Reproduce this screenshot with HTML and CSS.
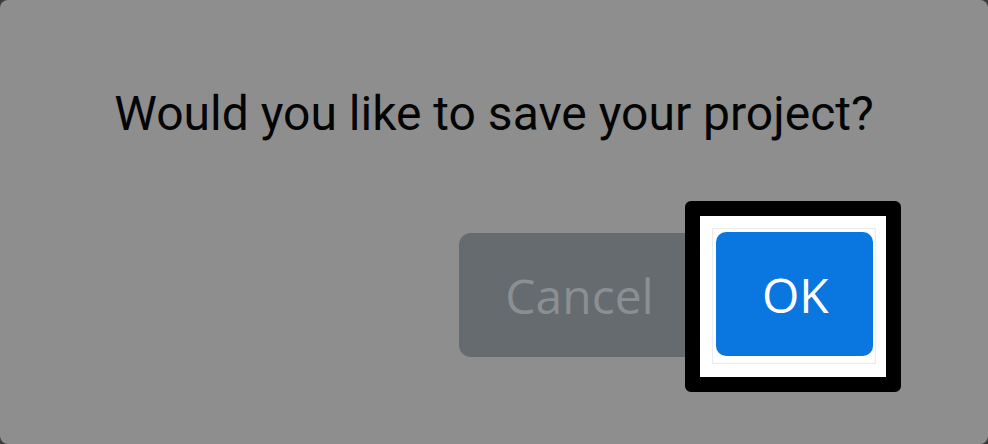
FILE: index.html
```html
<!DOCTYPE html>
<html lang="en">

<head>
  <meta charset="UTF-8">
  <meta name="viewport" content="width=device-width, initial-scale=1.0">
  <title>Save project</title>
  <link rel="stylesheet" href="styles.css">
</head>

<body>
  <div class="dialog" role="dialog">
    <h1 class="dialog-title">Would you like to save your project?</h1>

    <div class="dialog-actions">
      <button class="btn btn-cancel">Cancel</button>
      <span class="focus-ring">
        <span class="focus-inner">
          <button class="btn btn-ok">OK</button>
        </span>
      </span>
    </div>
  </div>
</body>

</html>
```

FILE: styles.css
```css
html,
body {
  margin: 0;
  height: 100%;
}

body {
  background-color: #3c3c3c;
  font-family: 'Roboto', Arial, sans-serif;
}

.dialog {
  box-sizing: border-box;
  height: 100%;
  background-color: #8e8e8e;
  border-radius: 8px;
  padding: 86px 87px 0 0;
}

.dialog-title {
  margin: 0;
  font-size: 48px;
  font-weight: 400;
  line-height: 56px;
  color: #050505;
  text-align: center;
  padding-left: 87px;
}

.dialog-actions {
  display: flex;
  justify-content: flex-end;
  align-items: flex-start;
  margin-top: 59px;
}

.btn {
  font-family: 'Open Sans', Arial, sans-serif;
  font-size: 48px;
  font-weight: 400;
  height: 124px;
  padding: 0 46px;
  border: none;
  border-radius: 12px;
  cursor: pointer;
}

.btn-cancel {
  margin-top: 32px;
  width: 241px;
  background-color: #666b6f;
  color: #8b8f93;
}

.focus-ring {
  display: block;
  margin-left: -15px;
  border: 15px solid #000;
  border-radius: 6px;
  background-color: #fff;
  padding: 12px 10px 13px 12px;
}

.focus-inner {
  display: block;
  padding: 4px 3px 8px 4px;
  box-shadow: inset 0 0 0 1px #ececec, inset 0 0 3px #e4e4e4;
}

.btn-ok {
  display: block;
  width: 157px;
  background-color: #0a76e0;
  color: #ffffff;
  border-radius: 10px;
}
```
